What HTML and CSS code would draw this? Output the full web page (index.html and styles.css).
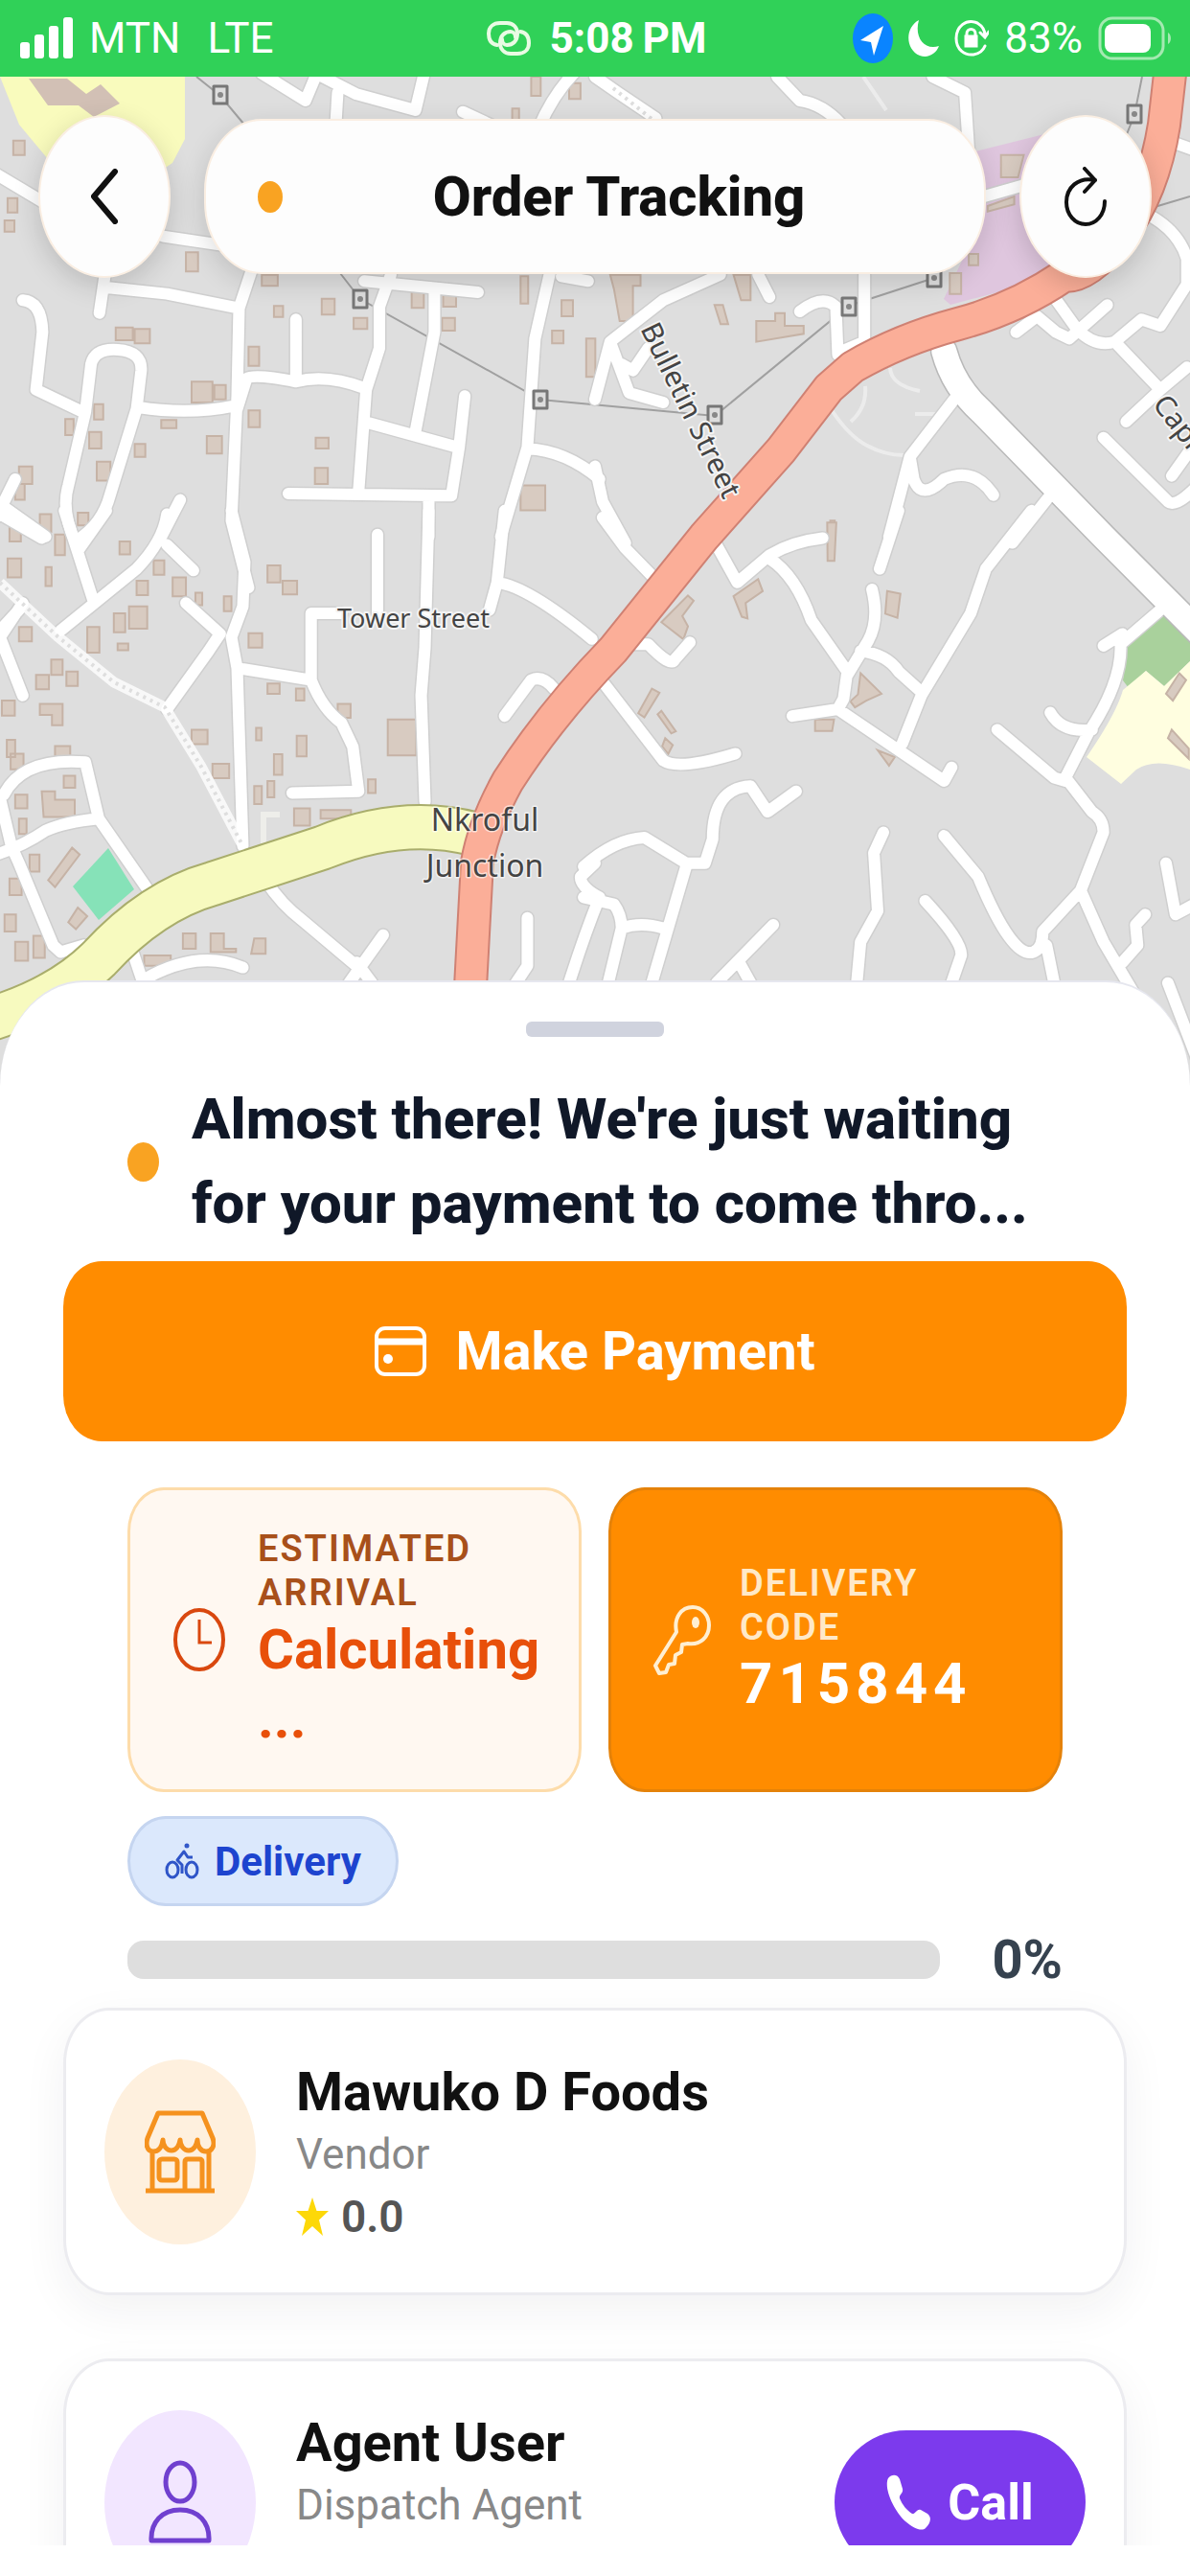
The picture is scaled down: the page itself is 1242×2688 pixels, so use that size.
FILE: index.html
```html
<!DOCTYPE html>
<html lang="en">
<head>
<meta charset="utf-8">
<meta name="viewport" content="width=device-width, initial-scale=1">
<title>Order Tracking</title>
<link rel="stylesheet" href="styles.css">
</head>
<body>
<div class="app">
  <div class="status">
    <div class="status-left">
      <svg class="i-signal" viewBox="0 0 56 44" fill="#fff"><rect x="0" y="26" width="10" height="17" rx="3"/><rect x="15" y="18" width="10" height="25" rx="3"/><rect x="30" y="9" width="10" height="34" rx="3"/><rect x="45" y="0" width="10" height="43" rx="3"/></svg>
      <span>MTN</span><span class="lte">LTE</span>
    </div>
    <div class="status-mid">
      <svg class="i-link" viewBox="0 0 46 36" fill="none" stroke="#e9fbe4" stroke-width="4" stroke-linecap="round"><path d="M11 25C4 24 2 19 2 13 2 6 7 2 14 2H21C28 2 32 7 32 13 32 21 27 25 21 25 18 25 16 22 16 19"/><path d="M35 11C42 12 44 17 44 23 44 30 39 34 32 34H25C18 34 14 29 14 23 14 15 19 11 25 11 28 11 30 14 30 17"/></svg>
      <time>5:08&#8201;PM</time>
    </div>
    <div class="status-right">
      <svg class="i-loc" viewBox="0 0 42 52"><ellipse cx="21" cy="26" rx="21" ry="26" fill="#0a84ff"/><path d="M32 13 8 28l11 2 3 14z" fill="#fff"/></svg>
      <svg class="i-moon" viewBox="0 0 32 38"><path d="M11 0C-4 8-3 31 12 37c9 3 17-2 20-10C16 32 6 17 11 0z" fill="#fff"/></svg>
      <svg class="i-lock" viewBox="0 0 36 40" fill="none" stroke="#fff" stroke-width="3"><path d="M24 4C12-1 2 8 2 20s9 18 18 17c6-1 10-4 12-9M24 4c5 3 8 8 8 13m-5-3 5 5 4-6" stroke-linecap="round"/><path d="M12 18h11v10H12z" fill="#fff"/><path d="M13 18v-3c0-6 9-6 9 0v3"/></svg>
      <span>83%</span>
      <svg class="i-batt" viewBox="0 0 78 46"><rect x="2" y="2" width="66" height="42" rx="13" fill="none" stroke="#a4e9b1" stroke-width="3"/><rect x="7" y="8" width="48" height="30" rx="8" fill="#fff"/><path d="M73 17c4 2 4 10 0 12z" fill="#a4e9b1"/></svg>
    </div>
  </div>

  <div class="map-area">
    <svg class="map" viewBox="0 80 1242 1060" preserveAspectRatio="xMidYMin slice" role="img" aria-label="Map of Nkroful Junction">
      <defs>
        <g id="roads">
          <path transform="translate(0 80) scale(.396 .3333)" d="M-10 305L110 390M60 700Q110 705 112 800L95 980 210 1045M200 1460Q160 1360 180 1280L225 1050 240 900Q250 850 310 855 375 860 372 920L360 1040 290 1310Q270 1400 205 1450M365 1035Q500 1060 620 1030M278 610L262 740M280 660L440 680 630 725 665 600M630 725L625 1000 610 1390 655 1600M430 500L600 530M625 1040L650 945Q670 930 780 955 860 930 960 975M780 760V950M1030 620L1000 720V850L965 980 945 1300M960 640L1260 675M1145 670V800L1095 1110M975 1085L1205 1160M1225 1000L1210 1160 1190 1310M760 1305L1190 1312M1130 1315V1440M1450 610L1410 820 1390 1160 1320 1440M1390 1165Q1490 1170 1580 1260M475 1325L425 1440M40 1260L-10 1380M-10 1330L120 1440M690 -10L805 75 835 -10M850 0L940 55 1095 105 1118 -10M890 50L885 150M1220 110L1310 160M1520 -20Q1460 50 1420 160M1480 625L1550 640"/>
          <path transform="translate(621 80) scale(.396 .3333)" d="M0 0L60 50 160 130M480 0L540 75Q600 85 650 150M890 0L975 50 985 230M430 620L460 690M330 620L180 700 40 830 90 990 180 1020M40 830L0 1010M70 900L100 920 140 850M540 735Q600 680 635 720L640 870M710 620V830L650 860M1010 380L1130 340M1510 200L1580 230M1470 440Q1540 490 1560 570L1560 650 1490 780 1440 760 1370 830Q1320 850 1270 790L1210 690M1350 715L1250 820 1215 800 1165 750 1110 800M1370 830L1490 980 1560 910M1490 980L1400 1080M1580 1150L1520 1250M1340 1130L1510 1330Q1530 1350 1580 1290M960 990L830 1190 840 1260Q860 1330 920 1260 1000 1220 1050 1310M830 1190L775 1440M1200 1310L1100 1460M0 1220L20 1330 80 1460"/>
          <path transform="translate(0 540) scale(.396 .3571)" d="M0 -10L110 60M170 -20L245 240M280 -20L210 90M440 -10Q430 70 360 150L160 330M440 80L510 155M610 -20L645 130 640 260 610 350 625 440 640 960M490 250L580 340 550 390 440 560M625 440L820 475Q850 560 900 600L930 670 945 800 770 805M820 475L820 280H900M995 50V280M1130 -20L1120 380 1110 520 1120 830M1330 -20L1310 190 1290 270M1310 190Q1390 200 1560 355M60 250L0 350 60 520M50 270L0 330M10 810Q60 700 225 715L260 880 385 1080M0 820L30 960 50 1010 140 1250 160 1270 220 1250M-10 985Q60 960 120 915 170 890 260 880M700 1060Q740 1130 800 1180L950 1320M1010 1220L920 1360M940 1300L980 1360M350 1270L380 1370M380 1350Q520 1260 640 1315M1330 580L1400 475Q1430 460 1460 500M1390 1170V1310L1360 1360M1568 1010L1530 1050Q1530 1080 1580 1110 1540 1220 1500 1360"/>
          <path transform="translate(621 540) scale(.396 .3571)" d="M20 0L80 90 150 170M320 80L375 190 460 110Q520 70 600 60M460 120Q530 170 570 300L665 450 655 530 640 560 520 580M800 -20L750 150M730 210Q750 300 720 360L665 460M700 390Q770 400 800 450L860 510M1150 -20L1030 150 990 280 860 520 810 660M640 560L920 770 940 730M90 370H140Q200 440 210 415L250 365M20 480L180 710Q220 740 370 690M-30 1020Q50 940 130 935L240 1010H290L310 940Q310 790 410 785L455 860 530 800M240 1020L150 1360M-30 1110L50 1130Q70 1160 70 1200L35 1360M70 1200Q120 1180 180 1200M470 1190L320 1360M380 1300L410 1360M760 920L735 980 745 1150 700 1240 690 1360M870 1120Q970 1240 965 1280L940 1360M920 930L1010 1050Q1100 1290 1155 1270 1180 1260 1180 1210L1280 1090 1340 920Q1340 880 1310 860L1240 760 1300 630Q1390 480 1385 370L1490 270M1390 340L1340 375M1200 570Q1230 630 1310 620M1240 770L1210 760 1060 620M1280 1090L1340 1240 1420 1390M1390 1300L1430 1250 1425 1190 1450 1160M1190 1250L1210 1360M1505 1010L1530 1160 1580 1130M1510 1360L1600 1620"/>
        </g>
        <g id="lane"><path transform="translate(621 80) scale(.396 .3333)" d="M920 860Q945 970 1020 1050L1340 1440 1600 1750"/></g>
        <path id="yellow" transform="translate(0 540) scale(.396 .3571)" d="M-40 1470Q150 1410 260 1290 400 1120 560 1070L850 965Q1060 870 1250 925"/>
        <g id="red"><path d="M1223 60L1215 130Q1204 200 1170 245T1110 288Q1060 322 1000 338T890 383L865 405 815 470 735 560 640 678Q575 745 530 815 505 860 498 900L491 1030"/></g>
        <g id="pylon"><rect x="-7" y="-9" width="14" height="18" fill="#ddd" stroke="#777" stroke-width="3"/><circle r="3" fill="#888"/></g>
      </defs>
      <rect y="80" width="1242" height="1060" fill="#dedede"/>
      <path d="M0 80H193V145L180 170 150 190H70L20 130z" fill="#f9fbbd"/>
      <path d="M30 82 70 82 90 98 105 88 125 108 98 122 82 110 50 110z" fill="#d2c0b5"/>
      <path d="M1010 160 1090 140 1110 260 1098 275 1060 300 992 318 985 312 1005 270 1028 220z" fill="#dfc6de"/>
      <path d="M1177 662 1218 634 1242 655V690L1215 716 1196 700 1178 718 1172 710z" fill="#a9d19c"/>
      <path d="M1172 720 1196 700 1215 716 1242 690V803Q1205 790 1186 803L1170 818 1134 790Q1165 745 1172 720z" fill="#fffee0"/>
      <path d="M76 925 113 885 140 928 103 960z" fill="#86e2b8"/>
      <g class="bld">
        <path transform="translate(0 80) scale(.396 .3333)" d="M35 200h30v45h-30zM20 380h26v45h-26zM12 450h26v35h-26zM490 550h32v60h-32zM690 620h42v35h-42zM722 718h24v34h-24zM848 695h34v50h-34zM932 755h36v35h-36zM305 785h45v40h-45zM355 790h40v45h-40zM655 845h28v60h-28zM505 955h55v65h-55zM565 965h30v45h-30zM655 1045h30v52h-30zM248 1025h24v48h-24zM235 1112h32v52h-32zM172 1072h22v50h-22zM355 1150h28v40h-28zM425 1075h40v25h-40zM545 1125h40v55h-40zM832 1130h34v34h-34zM830 1225h34v50h-34zM255 1205h36v60h-36zM50 1220h35v55h-35zM40 1275h25v50h-25zM105 1370h30v55h-30zM205 1365h28v40h-28zM1085 672h32v52h-32zM1168 665h34v55h-34zM1165 755h34v40h-34zM1480 700h30v50h-30zM1455 795h30v40h-30zM1372 625h20v85h-20zM1545 820h24v120h-24zM1372 1280h65v78h-65zM1400 0h25v60h-25zM1350 100h18v40h-18zM1500 20h30v50h-30z"/>
        <path transform="translate(621 80) scale(.396 .3333)" d="M40 620h80v35h-20v110h-35l-15 -100zM365 620h45v80h-25zM315 715h22l14 60h-20zM425 765h50v-25h25v40h50v25l-125 25zM935 615h30v65h-30zM985 555h25v35h-25zM1070 245h60l-15 70h-45zM1035 405l70 -30v25l-70 22zM620 1390h12v60h-12z"/>
        <path transform="translate(0 540) scale(.396 .3571)" d="M25 20h30v50h-30zM20 120h36v55h-36zM145 50h26v60h-26zM120 145h16v55h-16zM315 70h28v38h-28zM405 125h28v42h-28zM360 185h30v42h-30zM455 175h35v55h-35zM590 230h20v44h-20zM515 220h18v36h-18zM705 140h34v50h-34zM745 185h38v40h-38zM655 338h36v42h-36zM340 260h48v65h-48zM300 280h30v55h-30zM230 320h32v75h-32zM50 320h34v42h-34zM135 415h30v45h-30zM95 460h34v42h-34zM175 450h30v42h-30zM310 368h28v20h-28zM5 535h34v44h-34zM105 545h60v62h-28v-30h-32zM145 668h40v30h-40zM18 650h22v50h-22zM28 690h34v46h-34zM505 620h42v42h-42zM560 720h44v42h-44zM675 615h14v36h-14zM782 638h26v60h-26zM722 692h22v60h-22zM705 770h18v48h-18zM670 785h20v52h-20zM705 485h32v30h-32zM780 500h22v35h-22zM890 545h34v40h-34zM970 765h20v40h-20zM1022 590h75v105h-75zM775 850h42v50h-42zM845 855h80v25h-80zM40 810h32v40h-32zM110 800h35v25h52v50h-82zM50 880h20v45h-20zM168 755h30v35h-30zM78 985h26v50h-26zM25 1055h32v48h-32zM190 965l20 20 -65 95 -18 -20zM205 1140l25 25 -30 38 -20 -20zM12 1160h30v50h-30zM40 1240h34v55h-34zM88 1222h30v65h-30zM482 1215h34v45h-34zM555 1215h35v45h32v10h-67zM670 1230h30v45h-38zM380 1280h70v30h-70z"/>
        <path transform="translate(621 540) scale(.396 .3571)" d="M612 15h24l-5 112h-18zM770 215l35 8 -8 70 -32 -12zM430 180l12 35 -45 35 5 45 -15 -5 -22 -60zM245 228l15 15 -30 45 15 30 -12 38 -58 -50zM150 500l20 12 -40 72 -16 -12zM175 565l38 60 -12 6 -36 -56zM185 645l20 20 -12 26 -16 -22zM700 455l55 60 -40 20 -30 20 -12 -18 20 -20zM580 590h50l-5 34h-45zM745 680l45 20 -15 25zM1540 455l18 20 -35 60 -18 -20zM1520 620l45 55v30l-55 -60z"/>
      </g>
      <path class="wire" d="M205 80L230 100 255 130M355 285L376 312 564 417 746 434 886 319 975 290M1192 80L1184 120 1160 180M1205 216L1242 205"/>
      <path class="track" d="M929 384Q930 402 960 408M868 428Q886 455 905 465T943 475M903 403Q905 425 888 440M955 432H978M901 80L925 115"/>
      <use href="#roads" class="casing"/>
      <path class="steps-bed" d="M0 608L60 664 119 712 172 738 210 800 252 880"/>
      <use href="#lane" class="lane-casing"/>
      <use href="#roads" class="road"/>
      <use href="#lane" class="lane"/>
      <path class="steps" d="M0 608L60 664 119 712 172 738 210 800 252 880M640 92L680 124"/>
      <path d="M275 880V850H292" class="path"/>
      <use href="#yellow" class="yellow-casing"/><use href="#yellow" class="yellow"/>
      <use href="#red" class="red-casing"/><use href="#red" class="red"/>
      <use href="#pylon" x="230" y="99"/><use href="#pylon" x="376" y="312"/><use href="#pylon" x="564" y="417"/><use href="#pylon" x="746" y="433"/><use href="#pylon" x="886" y="320"/><use href="#pylon" x="975" y="290"/><use href="#pylon" x="1184" y="119"/>
      <g class="labels">
        <text font-size="30" transform="translate(668 343) rotate(64)">Bulletin Street</text>
        <text font-size="27" transform="translate(352 655)">Tower Street</text>
        <text font-size="30" transform="translate(1202 422) rotate(52)">Capr</text>
        <text class="place" x="506" y="867">Nkroful</text>
        <text class="place" x="506" y="915">Junction</text>
      </g>
    </svg>
    <header class="top">
      <button class="round" type="button" aria-label="Back"><svg viewBox="0 0 28 58" class="i-back"><path d="M25 3 3 29 25 55" fill="none" stroke="#111" stroke-width="6" stroke-linecap="round" stroke-linejoin="round"/></svg></button>
      <div class="pill"><i class="dot"></i><h1>Order Tracking</h1></div>
      <button class="round" type="button" aria-label="Refresh"><svg viewBox="0 0 44 62" class="i-refresh"><path d="M32 14C14 10 2 22 2 37c0 13 9 23 20 23s20-10 20-24M21 2 32 14 21 26" fill="none" stroke="#111" stroke-width="4" stroke-linecap="round" stroke-linejoin="round"/></svg></button>
    </header>
  </div>

  <main class="sheet">
    <div class="handle"></div>
    <div class="scroll">
      <div class="headline"><i class="dot big"></i><h2>Almost there! We're just waiting for your payment to come thro...</h2></div>
      <button class="pay" type="button"><svg class="i-card" viewBox="0 0 54 52" fill="none" stroke="#fff" stroke-width="4"><rect x="2" y="2" width="50" height="48" rx="9"/><path d="M2 16h50" stroke-width="7"/><circle cx="14" cy="34" r="5" fill="#fff" stroke="none"/></svg>Make Payment</button>
      <div class="stats">
        <section class="stat eta">
          <svg class="i-clock" viewBox="0 0 56 68" fill="none" stroke="#d9480f" stroke-width="4"><ellipse cx="28" cy="34" rx="25" ry="31"/><path d="M28 13v24h13" stroke-width="3"/></svg>
          <div><h3>Estimated arrival</h3><p>Calculating<wbr>...</p></div>
        </section>
        <section class="stat code">
          <svg class="i-key" viewBox="0 0 60 74" fill="none" stroke="#ffefd2" stroke-width="4" stroke-linejoin="round"><path d="M2 64 24 29C21 14 29 3 41 3c10 0 17 9 17 19 0 12-9 21-22 19l-6 1-1 8-6 3-1 9-6 1-3 8-7 1z"/><ellipse cx="44" cy="19" rx="4" ry="6" fill="#ffefd2" stroke="none"/></svg>
          <div><h3>Delivery code</h3><p>715844</p></div>
        </section>
      </div>
      <div class="badge"><svg class="i-bike" viewBox="0 0 36 38" fill="none" stroke="#2f55c8" stroke-width="3"><ellipse cx="8" cy="28" rx="6" ry="8"/><ellipse cx="28" cy="28" rx="6" ry="8"/><path d="M18 32v-9l-5-5 7-9 4 6h5" stroke-linejoin="round"/><circle cx="23" cy="3" r="1" fill="#2f55c8"/></svg>Delivery</div>
      <div class="progress"><div class="bar" role="progressbar" aria-label="Order progress" aria-valuenow="0" aria-valuemin="0" aria-valuemax="100"></div><span>0%</span></div>
      <article class="card">
        <div class="avatar vendor"><svg class="i-store" viewBox="0 0 74 88" fill="none" stroke="#f5921e" stroke-width="5" stroke-linejoin="round"><path d="M14 4H60L71 30C74 38 70 44 64 44 58 44 55 38 55 32 54 38 51 43 46 43 41 43 37 38 37 32 36 38 33 43 28 43 23 43 19 38 19 32 18 40 14 44 9 44 2 44 1 36 3 30zM8 44V84M67 44V84M1 85H73" /><rect x="15" y="52" width="19" height="22" rx="3"/><path d="M42 84V55q0-3 3-3h12q3 0 3 3v29"/></svg></div>
        <div class="info"><h3>Mawuko D Foods</h3><p>Vendor</p><div class="rating"><svg class="i-star" viewBox="0 0 34 40" fill="#fdd808"><path d="M17 0 21.500 14H34L24 23.500 28 40 17 30 6 40 10 23.500 0 14H12.500z"/></svg>0.0</div></div>
      </article>
      <article class="card">
        <div class="avatar agent"><svg class="i-user" viewBox="0 0 66 88" fill="none" stroke="#7040cf" stroke-width="5" stroke-linejoin="round"><ellipse cx="33" cy="23" rx="15" ry="20"/><path d="M3 84C2 65 14 52 33 52S64 65 63 84z"/></svg></div>
        <div class="info"><h3>Agent User</h3><p>Dispatch Agent</p></div>
        <button class="call" type="button"><svg class="i-phone" viewBox="0 0 46 58" fill="#fff"><path d="M2 4C6-1 12 0 14 5L17 15C18 20 13 21 14 25 17 32 21 37 27 41 30 42 32 35 36 37L43 41C48 45 46 51 41 56 37 60 28 56 20 49 8 38-3 14 2 4z"/></svg>Call</button>
      </article>
    </div>
  </main>
</div>
</body>
</html>
```

FILE: styles.css
```css
* { box-sizing: border-box; margin: 0; padding: 0; }
body { background: #fff; font-family: Roboto, "Liberation Sans", sans-serif; color: #111; }
button { font: inherit; border: 0; cursor: pointer; }
svg { display: block; flex: none; }
.app { height: 100vh; display: flex; flex-direction: column; overflow: hidden; padding-bottom: 32px; }

.status { flex: none; height: 80px; background: #30d158; color: #fff; display: grid; grid-template-columns: 1fr auto 1fr; align-items: center; padding: 0 18px 0 21px; font-size: 44px; }
.status > div { display: flex; align-items: center; }
.status-left { gap: 16px; }
.lte { margin-left: 12px; }
.status-mid { gap: 20px; font-weight: 700; }
.status-right { justify-content: flex-end; gap: 16px; }
.i-signal { width: 56px; height: 44px; }
.i-link { width: 46px; height: 36px; }
.i-loc { width: 42px; height: 52px; }
.i-moon { width: 32px; height: 38px; }
.i-lock { width: 36px; height: 40px; }
.i-batt { width: 78px; height: 46px; }

.map-area { flex: none; position: relative; }
.map { width: 100%; height: 1060px; }
.map path { vector-effect: non-scaling-stroke; }
.map use { fill: none; stroke-linecap: round; stroke-linejoin: round; }
.casing { stroke: #cfcfcf; stroke-width: 15px; }
.road { stroke: #fff; stroke-width: 12px; }
.lane-casing { stroke: #b9b9b9; stroke-width: 29px; }
.lane { stroke: #fff; stroke-width: 26px; }
.yellow-casing { stroke: #a9ad6c; stroke-width: 48px; }
.yellow { stroke: #f7fabf; stroke-width: 44px; }
.red-casing { stroke: #cf8173; stroke-width: 36px; }
.red { stroke: #fbae98; stroke-width: 32px; }
.bld { fill: #d8cbc1; stroke: #c6b3a6; stroke-width: 2px; }
.wire { fill: none; stroke: #a0a0a0; stroke-width: 2px; }
.track { fill: none; stroke: #ececec; stroke-width: 4px; }
.path { fill: none; stroke: #eeeeea; stroke-width: 6px; }
.steps-bed { fill: none; stroke: #f8f8f8; stroke-width: 11px; }
.steps { fill: none; stroke: #dedede; stroke-width: 4px; stroke-dasharray: 3 5; }
.labels { font-family: "Noto Sans", sans-serif; fill: #444; stroke: #f4f4f4; stroke-width: 4px; stroke-linejoin: round; paint-order: stroke; }
.place { font-size: 32px; text-anchor: middle; stroke-width: 3px; stroke: rgba(255, 255, 255, .6); }

.top { position: absolute; top: 40px; left: 0; right: 0; padding: 0 40px; display: flex; align-items: center; gap: 35px; }
.round { width: 138px; height: 170px; border-radius: 50%; background: #fdfdfd; border: 2px solid #faeee2; box-shadow: 0 8px 28px rgba(0, 0, 0, .16); display: grid; place-items: center; }
.i-back { width: 28px; height: 58px; }
.i-refresh { width: 44px; height: 62px; }
.pill { flex: 1; height: 162px; border-radius: 60px / 75px; background: #fdfdfd; border: 2px solid #faeee2; box-shadow: 0 8px 28px rgba(0, 0, 0, .14); padding: 0 54px; display: flex; align-items: center; gap: 24px; }
.pill h1 { flex: 1; text-align: center; font-size: 58px; font-weight: 800; }
.dot { flex: none; width: 26px; height: 33px; border-radius: 50%; background: #f9a322; }
.dot.big { width: 33px; height: 41px; }

.sheet { flex: 1; min-height: 0; position: relative; margin-top: -117px; background: #fff; border-top: 2px solid #e6e7ef; border-radius: 88px 88px 0 0 / 110px 110px 0 0; display: flex; flex-direction: column; overflow: hidden; }
.handle { flex: none; width: 144px; height: 16px; border-radius: 6px; background: #d0d3de; margin: 41px auto 42px; }
.scroll { flex: 1; min-height: 0; overflow: hidden; padding: 0 66px; display: flex; flex-direction: column; }
.scroll > * { flex: none; }
.headline { padding: 0 67px; display: flex; align-items: center; gap: 34px; }
.headline h2 { flex: 1; font-size: 60px; line-height: 88px; font-weight: 800; color: #101828; }
.pay { margin-top: 16px; height: 188px; border-radius: 40px / 48px; background: #ff8c00; color: #fff; font-size: 56px; font-weight: 700; display: flex; align-items: center; justify-content: center; gap: 30px; }
.i-card { width: 54px; height: 52px; }
.stats { margin: 48px 67px 0; display: grid; grid-template-columns: 1fr 1fr; gap: 28px; }
.stat { height: 318px; border: 3px solid #fddcaa; border-radius: 38px / 46px; background: #fff8f1; display: flex; align-items: center; padding: 0 40px 0 44px; gap: 30px; }
.eta { padding-right: 20px; gap: 33px; }
.stat h3 { font-size: 38px; line-height: 46px; font-weight: 600; letter-spacing: 2px; text-transform: uppercase; color: #a8501a; }
.stat p { font-size: 58px; line-height: 72px; font-weight: 700; color: #e8500a; }
.stat div { min-width: 0; flex: 1; }
.stat.code { background: #ff8c00; border-color: #e58209; }
.stat.code h3 { color: #ffe9c8; }
.stat.code p { color: #fff; font-size: 60px; letter-spacing: 6px; }
.i-clock { width: 56px; height: 68px; }
.i-key { width: 60px; height: 74px; }
.badge { align-self: flex-start; margin: 25px 0 0 67px; height: 94px; border: 3px solid #c5d5f0; border-radius: 40px / 47px; background: #dbe8fc; color: #1d44cf; font-size: 42px; font-weight: 700; display: flex; align-items: center; gap: 16px; padding: 0 36px; }
.i-bike { width: 36px; height: 38px; }
.progress { margin: 26px 67px 0; display: flex; align-items: center; gap: 54px; font-size: 56px; line-height: 60px; font-weight: 700; color: #36424f; }
.bar { flex: 1; height: 40px; border-radius: 17px; background: #dedede; }
.card { height: 300px; border: 3px solid #ececf0; border-radius: 48px / 58px; background: #fff; box-shadow: 0 16px 48px rgba(30, 30, 50, .06); margin-top: 66px; padding: 0 40px; display: flex; align-items: center; gap: 42px; }
.progress + .card { margin-top: 20px; }
.avatar { flex: none; width: 158px; height: 193px; border-radius: 50%; display: grid; place-items: center; }
.vendor { background: #fef0de; }
.agent { background: #f2e6ff; }
.i-store { width: 74px; height: 88px; }
.i-user { width: 66px; height: 88px; }
.info { flex: 1; min-height: 206px; padding-top: 6px; }
.info h3 { font-size: 56px; line-height: 70px; font-weight: 700; }
.info p { font-size: 44px; line-height: 60px; color: #888; }
.rating { display: flex; align-items: center; gap: 13px; font-size: 46px; line-height: 70px; font-weight: 600; color: #555; }
.i-star { width: 34px; height: 40px; }
.call { width: 262px; height: 150px; border-radius: 75px; background: #7c3aed; color: #fff; font-size: 52px; font-weight: 700; display: flex; align-items: center; justify-content: center; gap: 18px; }
.i-phone { width: 46px; height: 58px; }
```
